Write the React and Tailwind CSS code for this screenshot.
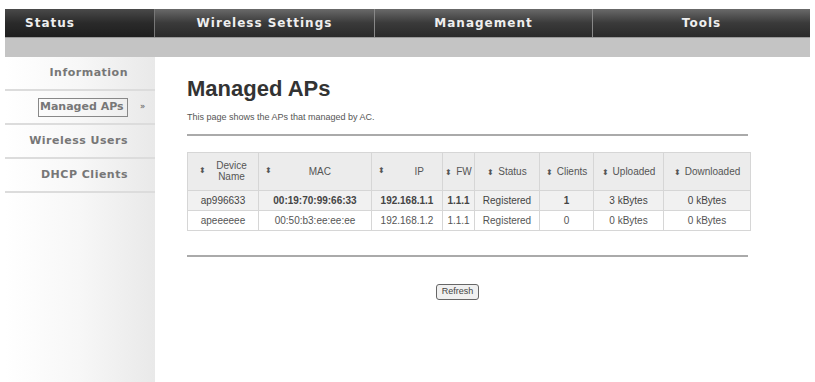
import React from "react";

const nav = "font-['DejaVu_Sans',sans-serif] font-bold text-[12px] tracking-[1px] text-[#eeeeee]";
const side = "font-['DejaVu_Sans',sans-serif] font-bold text-[11px] tracking-[0.5px] text-[#777]";

function Arrow() {
  return <span className="text-[8px] text-[#555] mr-[4px]">⬍</span>;
}

const cols = [
  { w: "w-[71px]", h: <span className="flex items-center justify-center gap-[6px]"><Arrow /><span className="leading-[11px]">Device<br />Name</span></span> },
  { w: "w-[113px]", h: <span className="flex items-center justify-between px-[6px] pr-[40px]"><Arrow /><span>MAC</span></span> },
  { w: "w-[71px]", h: <span className="flex items-center justify-between px-[6px] pr-[18px]"><Arrow /><span>IP</span></span> },
  { w: "w-[32px]", h: <span><Arrow />FW</span> },
  { w: "w-[65px]", h: <span><Arrow />Status</span> },
  { w: "w-[54px]", h: <span><Arrow />Clients</span> },
  { w: "w-[70px]", h: <span><Arrow />Uploaded</span> },
  { w: "w-[87px]", h: <span><Arrow />Downloaded</span> },
];

const rows = [
  ["ap996633", "00:19:70:99:66:33", "192.168.1.1", "1.1.1", "Registered", "1", "3 kBytes", "0 kBytes"],
  ["apeeeeee", "00:50:b3:ee:ee:ee", "192.168.1.2", "1.1.1", "Registered", "0", "0 kBytes", "0 kBytes"],
];

export default function App() {
  return (
    <div className="w-[815px] h-[382px] bg-white overflow-hidden pt-[9px] pl-[5px] pr-[5px]">
      {/* top nav */}
      <div className="flex h-[28px] bg-gradient-to-b from-[#6a6a6a] via-[#3a3a3a] to-[#2a2a2a]">
        <div className={`w-[150px] flex items-center pl-[20px] bg-gradient-to-b from-[#4a4a4a] via-[#2a2a2a] to-[#1e1e1e] border-r border-[#777] ${nav}`}>Status</div>
        <div className={`w-[220px] flex items-center justify-center border-r border-[#888] ${nav}`}>Wireless Settings</div>
        <div className={`w-[218px] flex items-center justify-center border-r border-[#888] ${nav}`}>Management</div>
        <div className={`flex-1 flex items-center justify-center ${nav}`}>Tools</div>
      </div>
      <div className="h-[20px] bg-[#c4c4c4] border-t border-[#9a9a9a]" />
      <div className="flex">
        {/* sidebar */}
        <div className="w-[150px] h-[330px] bg-gradient-to-r from-[#ffffff] via-[#f7f7f7] to-[#e9e9e9] flex flex-col">
          <div className={`h-[34px] flex items-center justify-end pr-[27px] border-b-2 border-[#dcdcdc] ${side}`}>Information</div>
          <div className={`h-[34px] flex items-center border-b-2 border-[#dcdcdc] ${side}`}>
            <span className="ml-[33px] w-[90px] h-[19px] border border-[#888] flex items-center pl-[1px] whitespace-nowrap tracking-[0px]">Managed APs</span>
            <span className="ml-[12px] text-[8px] text-[#777]">»</span>
          </div>
          <div className={`h-[34px] flex items-center justify-end pr-[27px] border-b-2 border-[#dcdcdc] ${side}`}>Wireless Users</div>
          <div className={`h-[34px] flex items-center justify-end pr-[27px] border-b-2 border-[#dcdcdc] ${side}`}>DHCP Clients</div>
        </div>
        {/* main */}
        <div className="flex-1 pl-[32px] pt-[18px] font-['Liberation_Sans',Arial,sans-serif]">
          <div className="text-[22px] font-bold text-[#333] leading-[28px]">Managed APs</div>
          <div className="text-[9px] text-[#555] mt-[8px]">This page shows the APs that managed by AC.</div>
          <div className="mt-[9px] w-[561px] h-[2px] bg-[#aaa]" />
          <table className="mt-[16px] border-collapse text-[10px] text-[#555] border border-[#d6d6d6]">
            <thead>
              <tr className="h-[38px] bg-[#ececec]">
                {cols.map((c, i) => (
                  <th key={i} className={`${c.w} font-normal border border-[#d6d6d6] text-center p-0`}>{c.h}</th>
                ))}
              </tr>
            </thead>
            <tbody>
              {rows.map((r, ri) => (
                <tr key={ri} className={`h-[20px] ${ri === 0 ? "bg-[#f1f1f1] text-[#444] font-bold" : "bg-white"}`}>
                  {r.map((v, i) => (
                    <td key={i} className={`border border-[#d6d6d6] text-center p-0 ${ri === 0 && (i === 0 || i === 4 || i === 6 || i === 7) ? "font-normal" : ""}`}>{v}</td>
                  ))}
                </tr>
              ))}
            </tbody>
          </table>
          <div className="mt-[24px] w-[561px] h-[2px] bg-[#aaa]" />
          <div className="w-[561px] flex justify-center mt-[27px]">
            <button className="ml-[-20px] h-[16px] px-[5px] text-[9px] text-[#444] bg-[#f0f0f0] border border-[#666] rounded-[3px] leading-none">Refresh</button>
          </div>
        </div>
      </div>
    </div>
  );
}
